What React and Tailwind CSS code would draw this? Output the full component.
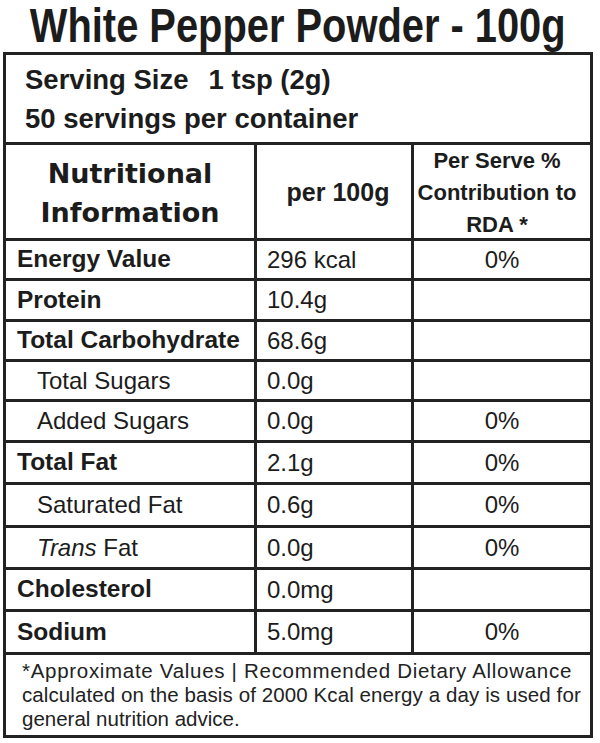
import React from 'react'

const rows = [
    { label: 'Energy Value', bold: true, value: '296 kcal', rda: '0%', h: 'h-[40px]' },
    { label: 'Protein', bold: true, value: '10.4g', rda: '', h: 'h-[41px]' },
    { label: 'Total Carbohydrate', bold: true, value: '68.6g', rda: '', h: 'h-[40px]' },
    { label: 'Total Sugars', indent: true, value: '0.0g', rda: '', h: 'h-[40px]' },
    { label: 'Added Sugars', indent: true, value: '0.0g', rda: '0%', h: 'h-[41px]' },
    { label: 'Total Fat', bold: true, value: '2.1g', rda: '0%', h: 'h-[42px]' },
    { label: 'Saturated Fat', indent: true, value: '0.6g', rda: '0%', h: 'h-[43px]' },
    { label: 'Trans', italic: true, indent: true, value: '0.0g', rda: '0%', h: 'h-[42px]' },
    { label: 'Cholesterol', bold: true, value: '0.0mg', rda: '', h: 'h-[42px]' },
    { label: 'Sodium', bold: true, value: '5.0mg', rda: '0%', h: 'h-[43px]' },
]

const NutritionRow = ({ row }) => {
    return (
        <div className={`grid grid-cols-[248px_157px_1fr] border-b-[3px] border-[#222] ${row.h}`}>
            <div className={`flex items-center ${row.bold ? 'font-bold pl-[11px] text-[24.5px]' : 'pl-[31px] text-[24px]'}`}>
                {row.italic ? <span><i>Trans</i> Fat</span> : row.label}
            </div>
            <div className='flex items-center border-l-[3px] border-[#222] pl-[10px] text-[24px]'>
                {row.value}
            </div>
            <div className='flex items-center justify-center border-l-[3px] border-[#222] text-[24px]'>
                {row.rda}
            </div>
        </div>
    )
}

const App = () => {
    return (
        <div className="w-[600px] h-[743px] bg-white text-[#1c1c1c] font-['Liberation_Sans',Arial,sans-serif] overflow-hidden">

            <h1 className="h-[52px] pt-[1px] pr-[5px] flex justify-center font-bold text-[48px] leading-[50px] whitespace-nowrap">
                <span className='inline-block shrink-0 scale-x-[0.83] origin-center'>White Pepper Powder - 100g</span>
            </h1>

            <div className='ml-[3px] w-[590px] border-[3px] border-[#222]'>

                {/* serving info */}
                <div className='h-[90px] border-b-[3px] border-[#222] pt-[5px] pl-[19px] font-bold text-[27.5px] leading-[39px]'>
                    <div>Serving Size<span className='ml-[20px]'>1 tsp (2g)</span></div>
                    <div>50 servings per container</div>
                </div>

                {/* header */}
                <div className='grid grid-cols-[248px_157px_1fr] h-[96px] border-b-[3px] border-[#222]'>
                    <div className="flex items-center justify-center text-center font-bold text-[27px] leading-[39px] font-['DejaVu_Sans',sans-serif]">
                        Nutritional<br />Information
                    </div>
                    <div className='flex items-center justify-center border-l-[3px] border-[#222] font-bold text-[25px] pl-[8px]'>
                        per 100g
                    </div>
                    <div className='flex items-center justify-center text-center border-l-[3px] border-[#222] font-bold text-[22px] leading-[32px] pr-[10px]'>
                        Per Serve %<br />Contribution to<br />RDA *
                    </div>
                </div>

                {
                    rows.map((row, index) => {
                        return <NutritionRow key={index} row={row} />
                    })
                }

                {/* footnote */}
                <div className='h-[80px] pt-[4px] pl-[16px] text-[20.5px] leading-[24px] whitespace-nowrap text-[#222]'>
                    <div className='tracking-[0.7px]'>*Approximate Values | Recommended Dietary Allowance</div>
                    <div className='tracking-[0.1px]'>calculated on the basis of 2000 Kcal energy a day is used for</div>
                    <div>general nutrition advice.</div>
                </div>

            </div>
        </div>
    )
}

export default App
